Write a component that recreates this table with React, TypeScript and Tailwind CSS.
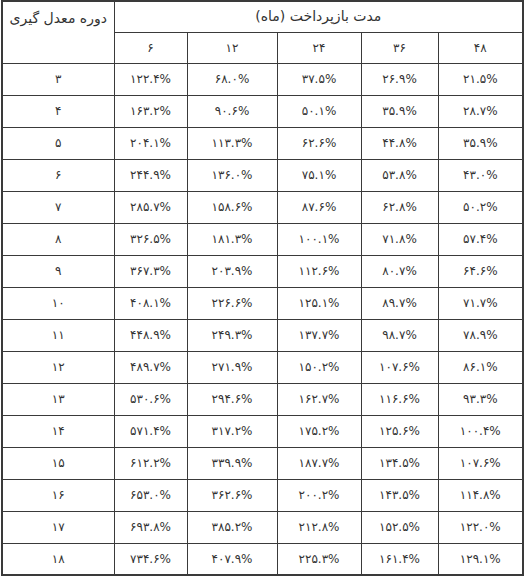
const rows: [number, string[]][] = [
  [3, ["122.4", "68.0", "37.5", "26.9", "21.5"]],
  [4, ["163.2", "90.6", "50.1", "35.9", "28.7"]],
  [5, ["204.1", "113.3", "62.6", "44.8", "35.9"]],
  [6, ["244.9", "136.0", "75.1", "53.8", "43.0"]],
  [7, ["285.7", "158.6", "87.6", "62.8", "50.2"]],
  [8, ["326.5", "181.3", "100.1", "71.8", "57.4"]],
  [9, ["367.3", "203.9", "112.6", "80.7", "64.6"]],
  [10, ["408.1", "226.6", "125.1", "89.7", "71.7"]],
  [11, ["448.9", "249.3", "137.7", "98.7", "78.9"]],
  [12, ["489.7", "271.9", "150.2", "107.6", "86.1"]],
  [13, ["530.6", "294.6", "162.7", "116.6", "93.3"]],
  [14, ["571.4", "317.2", "175.2", "125.6", "100.4"]],
  [15, ["612.2", "339.9", "187.7", "134.5", "107.6"]],
  [16, ["653.0", "362.6", "200.2", "143.5", "114.8"]],
  [17, ["693.8", "385.2", "212.8", "152.5", "122.0"]],
  [18, ["734.6", "407.9", "225.3", "161.4", "129.1"]],
];

const months = [6, 12, 24, 36, 48];

// latin digits -> persian digits
const fa = (s: string | number) =>
  String(s).replace(/[0-9]/g, (d) => "۰۱۲۳۴۵۶۷۸۹"[Number(d)]);

const cell = "border border-[#3a3a3a] text-center align-middle p-0";

export default function App() {
  return (
    <div className="bg-white min-h-screen pl-px font-['DejaVu_Sans',sans-serif] text-[12px] text-[#333]">
      <table className="w-[521px] table-fixed border-collapse border-2 border-[#3a3a3a]">
        <colgroup>
          <col className="w-[112px]" />
          <col className="w-[73px]" />
          <col className="w-[90px]" />
          <col className="w-[84px]" />
          <col className="w-[77px]" />
          <col className="w-[85px]" />
        </colgroup>
        <thead>
          <tr>
            <th
              rowSpan={2}
              dir="rtl"
              className="border border-[#3a3a3a] text-center align-top pt-[6px] font-normal text-[14px]"
            >
              دوره معدل گیری
            </th>
            <th colSpan={5} dir="rtl" className={`${cell} h-[31px] font-normal text-[14px]`}>
              مدت بازپرداخت (ماه)
            </th>
          </tr>
          <tr>
            {months.map((m) => (
              <th key={m} className={`${cell} h-[31px] font-normal`}>
                {fa(m)}
              </th>
            ))}
          </tr>
        </thead>
        <tbody>
          {rows.map(([p, vals]) => (
            <tr key={p}>
              <td className={`${cell} h-[32px]`}>{fa(p)}</td>
              {vals.map((v, i) => (
                <td key={i} className={`${cell} h-[32px]`}>
                  {fa(v)}%
                </td>
              ))}
            </tr>
          ))}
        </tbody>
      </table>
    </div>
  );
}
